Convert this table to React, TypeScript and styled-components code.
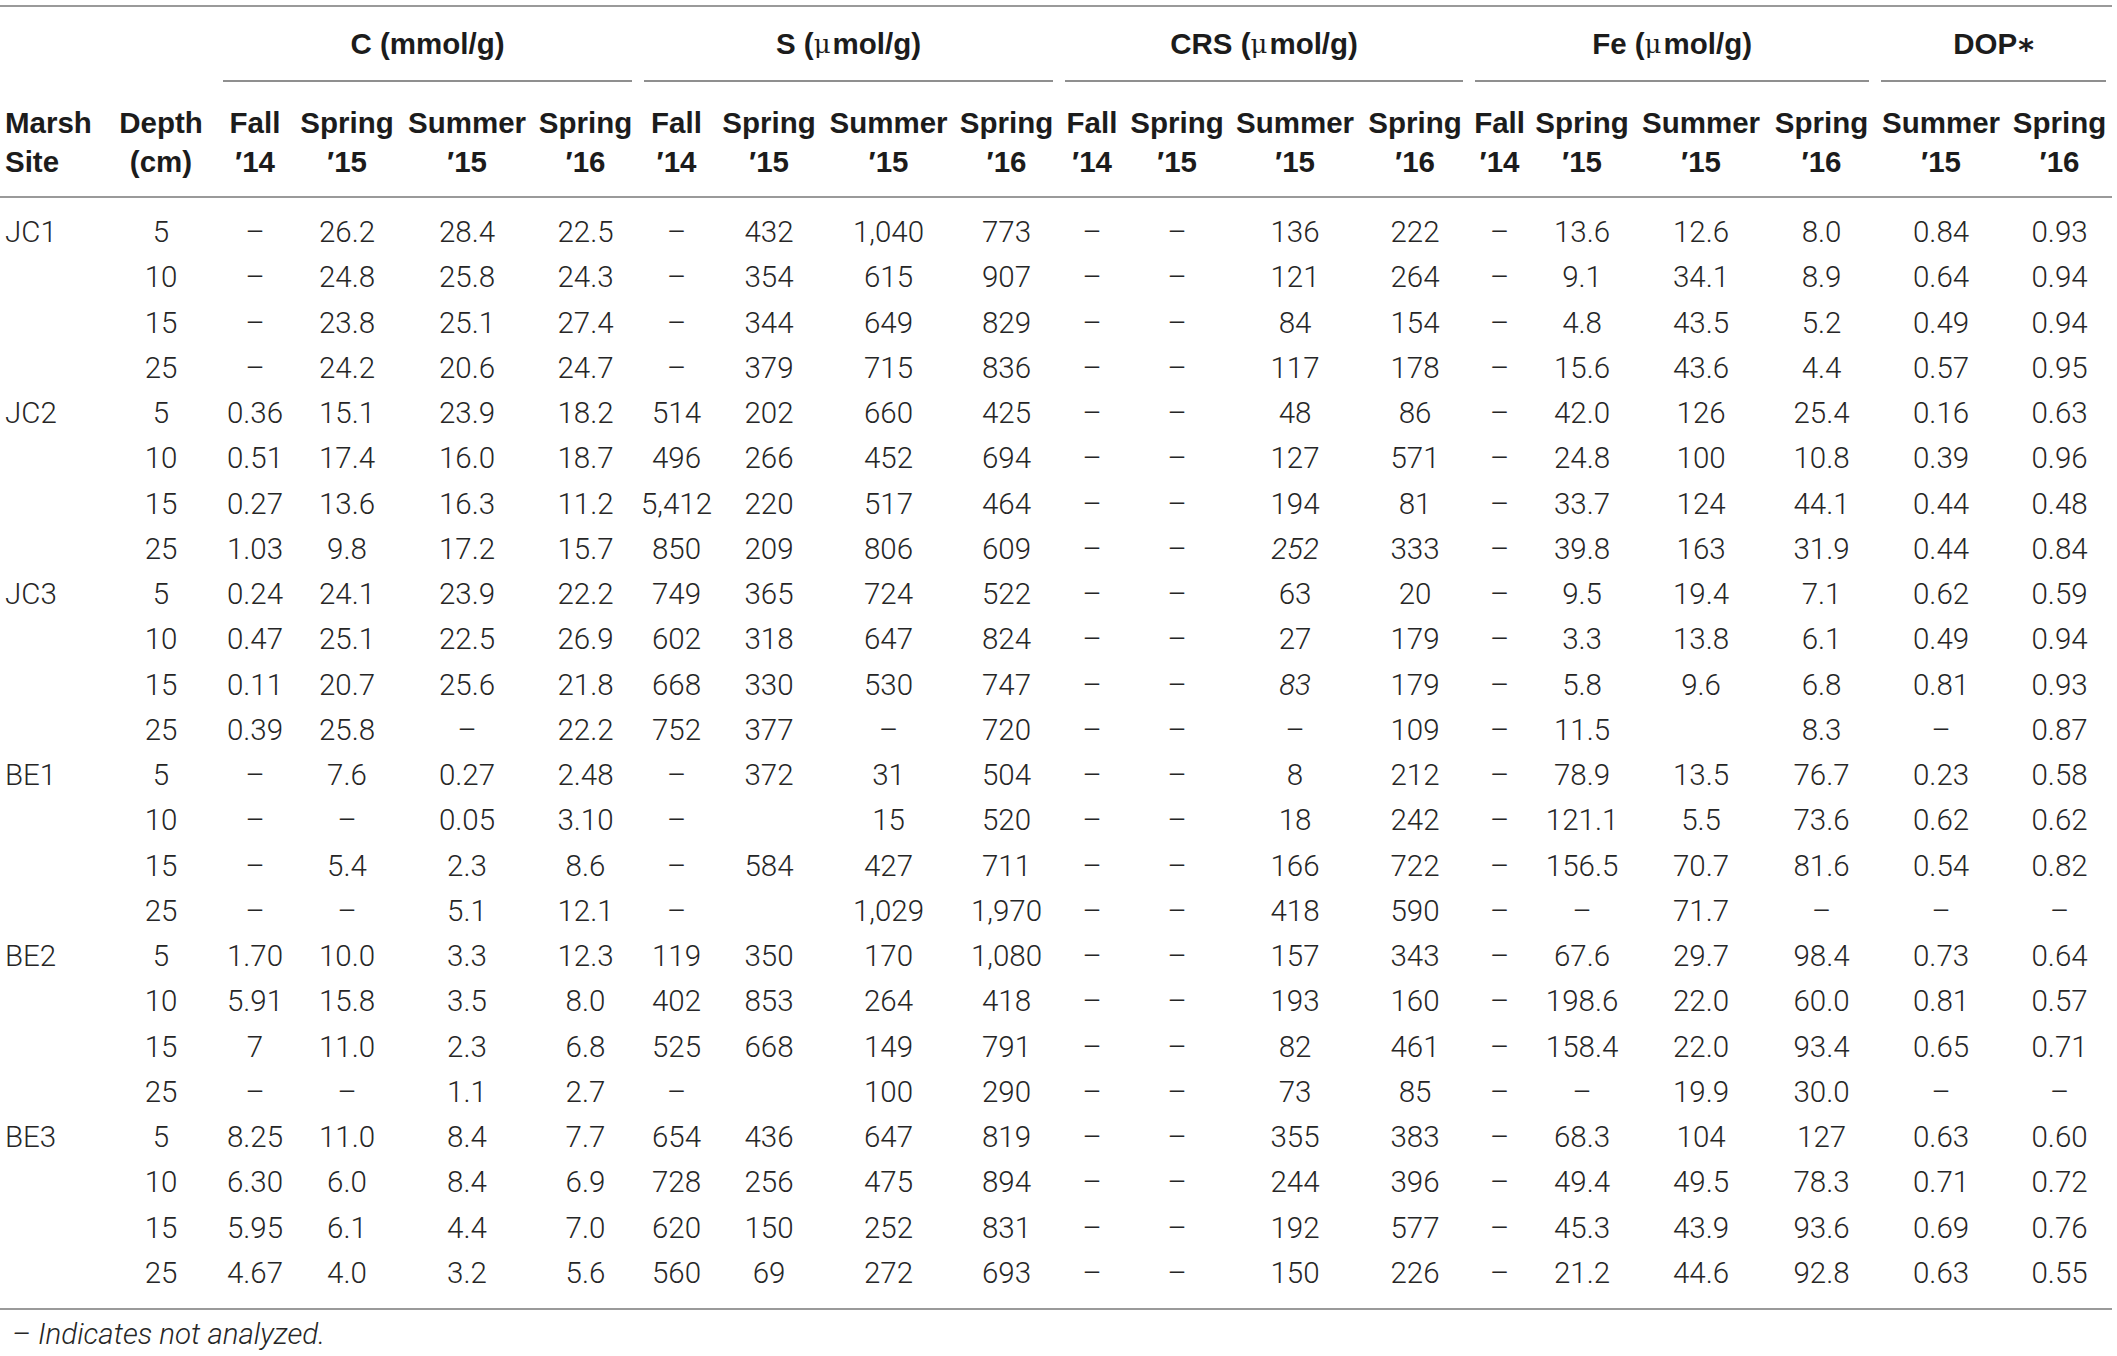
import React from 'react';
import styled, { createGlobalStyle } from 'styled-components';

const GlobalStyle = createGlobalStyle`
    body {
        margin: 0;
        background: #ffffff;
    }
`;

const widths = [105, 112, 76, 108, 132, 105, 77, 108, 131, 105, 66, 104, 132, 108, 61, 104, 134, 107, 132, 105];

const groups = [
    { label: 'C', unit: 'mmol/g', micro: false, span: 4 },
    { label: 'S', unit: 'mol/g', micro: true, span: 4 },
    { label: 'CRS', unit: 'mol/g', micro: true, span: 4 },
    { label: 'Fe', unit: 'mol/g', micro: true, span: 4 },
    { label: 'DOP', unit: '', micro: false, span: 2 },
];

const seasons = [
    ['Fall', '14'], ['Spring', '15'], ['Summer', '15'], ['Spring', '16'],
    ['Fall', '14'], ['Spring', '15'], ['Summer', '15'], ['Spring', '16'],
    ['Fall', '14'], ['Spring', '15'], ['Summer', '15'], ['Spring', '16'],
    ['Fall', '14'], ['Spring', '15'], ['Summer', '15'], ['Spring', '16'],
    ['Summer', '15'], ['Spring', '16'],
];

// "_" marks an italic value, "." a blank cell
const sites: { site: string; rows: [string, string][] }[] = [
    { site: 'JC1', rows: [
        ['5', '– 26.2 28.4 22.5 – 432 1,040 773 – – 136 222 – 13.6 12.6 8.0 0.84 0.93'],
        ['10', '– 24.8 25.8 24.3 – 354 615 907 – – 121 264 – 9.1 34.1 8.9 0.64 0.94'],
        ['15', '– 23.8 25.1 27.4 – 344 649 829 – – 84 154 – 4.8 43.5 5.2 0.49 0.94'],
        ['25', '– 24.2 20.6 24.7 – 379 715 836 – – 117 178 – 15.6 43.6 4.4 0.57 0.95'],
    ] },
    { site: 'JC2', rows: [
        ['5', '0.36 15.1 23.9 18.2 514 202 660 425 – – 48 86 – 42.0 126 25.4 0.16 0.63'],
        ['10', '0.51 17.4 16.0 18.7 496 266 452 694 – – 127 571 – 24.8 100 10.8 0.39 0.96'],
        ['15', '0.27 13.6 16.3 11.2 5,412 220 517 464 – – 194 81 – 33.7 124 44.1 0.44 0.48'],
        ['25', '1.03 9.8 17.2 15.7 850 209 806 609 – – _252 333 – 39.8 163 31.9 0.44 0.84'],
    ] },
    { site: 'JC3', rows: [
        ['5', '0.24 24.1 23.9 22.2 749 365 724 522 – – 63 20 – 9.5 19.4 7.1 0.62 0.59'],
        ['10', '0.47 25.1 22.5 26.9 602 318 647 824 – – 27 179 – 3.3 13.8 6.1 0.49 0.94'],
        ['15', '0.11 20.7 25.6 21.8 668 330 530 747 – – _83 179 – 5.8 9.6 6.8 0.81 0.93'],
        ['25', '0.39 25.8 – 22.2 752 377 – 720 – – – 109 – 11.5 . 8.3 – 0.87'],
    ] },
    { site: 'BE1', rows: [
        ['5', '– 7.6 0.27 2.48 – 372 31 504 – – 8 212 – 78.9 13.5 76.7 0.23 0.58'],
        ['10', '– – 0.05 3.10 – . 15 520 – – 18 242 – 121.1 5.5 73.6 0.62 0.62'],
        ['15', '– 5.4 2.3 8.6 – 584 427 711 – – 166 722 – 156.5 70.7 81.6 0.54 0.82'],
        ['25', '– – 5.1 12.1 – . 1,029 1,970 – – 418 590 – – 71.7 – – –'],
    ] },
    { site: 'BE2', rows: [
        ['5', '1.70 10.0 3.3 12.3 119 350 170 1,080 – – 157 343 – 67.6 29.7 98.4 0.73 0.64'],
        ['10', '5.91 15.8 3.5 8.0 402 853 264 418 – – 193 160 – 198.6 22.0 60.0 0.81 0.57'],
        ['15', '7 11.0 2.3 6.8 525 668 149 791 – – 82 461 – 158.4 22.0 93.4 0.65 0.71'],
        ['25', '– – 1.1 2.7 – . 100 290 – – 73 85 – – 19.9 30.0 – –'],
    ] },
    { site: 'BE3', rows: [
        ['5', '8.25 11.0 8.4 7.7 654 436 647 819 – – 355 383 – 68.3 104 127 0.63 0.60'],
        ['10', '6.30 6.0 8.4 6.9 728 256 475 894 – – 244 396 – 49.4 49.5 78.3 0.71 0.72'],
        ['15', '5.95 6.1 4.4 7.0 620 150 252 831 – – 192 577 – 45.3 43.9 93.6 0.69 0.76'],
        ['25', '4.67 4.0 3.2 5.6 560 69 272 693 – – 150 226 – 21.2 44.6 92.8 0.63 0.55'],
    ] },
];

const Sheet = styled.div`
    width: 2117px;
    padding-top: 5px;
`;

const DataTable = styled.table`
    width: 2112px;
    table-layout: fixed;
    border-collapse: separate;
    border-spacing: 0;
`;

const GroupCell = styled.th`
    height: 75px;
    padding: 0 6px;
    border-top: 2px solid #9a9a9a;
    vertical-align: bottom;
`;

const GroupLabel = styled.div<{ $ruled: boolean }>`
    height: 73px;
    display: flex;
    align-items: center;
    justify-content: center;
    border-bottom: 2px solid ${p => (p.$ruled ? '#8f8f8f' : 'transparent')};
    font-family: "Liberation Sans", Arial, sans-serif;
    font-weight: 700;
    font-size: 29.5px;
    color: #1c1c1c;
    white-space: pre;
`;

const Micro = styled.span`
    font-family: "DejaVu Serif", serif;
    font-weight: 400;
    font-size: 26px;
    margin-right: 2px;
`;

const Star = styled.span`
    font-family: "DejaVu Sans", sans-serif;
    font-weight: 700;
    font-size: 30px;
    margin-left: 1px;
    position: relative;
    top: -2px;
`;

const ColHead = styled.th<{ $align?: 'left' | 'center' }>`
    height: 93px;
    padding: 21px 0 0 ${p => (p.$align === 'left' ? '5px' : '0')};
    vertical-align: top;
    text-align: ${p => p.$align ?? 'center'};
    border-bottom: 2px solid #9a9a9a;
    font-family: "Liberation Sans", Arial, sans-serif;
    font-weight: 700;
    font-size: 29.5px;
    line-height: 39px;
    color: #1c1c1c;
    white-space: nowrap;
`;

const Cell = styled.td<{ $align?: 'left' | 'center'; $edge?: 'first' | 'last'; $italic?: boolean }>`
    height: 45.25px;
    padding: ${p => (p.$edge === 'first' ? '12px' : '0')} 0 ${p => (p.$edge === 'last' ? '12px' : '0')}
        ${p => (p.$align === 'left' ? '5px' : '0')};
    text-align: ${p => p.$align ?? 'center'};
    vertical-align: bottom;
    border-bottom: ${p => (p.$edge === 'last' ? '2px solid #9a9a9a' : 'none')};
    font-family: Roboto, "Liberation Sans", sans-serif;
    font-weight: 300;
    font-style: ${p => (p.$italic ? 'italic' : 'normal')};
    font-size: 29.5px;
    line-height: 45.25px;
    color: #262626;
    white-space: nowrap;
`;

const Note = styled.p`
    margin: 4px 0 0;
    padding-left: 12px;
    font-family: Roboto, "Liberation Sans", sans-serif;
    font-weight: 300;
    font-style: italic;
    font-size: 29.5px;
    line-height: 40px;
    color: #262626;
`;

export default function App() {
    const total = sites.reduce((n, s) => n + s.rows.length, 0);
    let index = 0;

    return (
        <Sheet>
            <GlobalStyle />
            <DataTable>
                <colgroup>
                    {widths.map((w, i) => <col key={i} style={{ width: w }} />)}
                </colgroup>
                <thead>
                    <tr>
                        <GroupCell colSpan={2}>
                            <GroupLabel $ruled={false} />
                        </GroupCell>
                        {groups.map(g => (
                            <GroupCell key={g.label} colSpan={g.span}>
                                <GroupLabel $ruled>
                                    {g.label === 'DOP' ? (
                                        <>DOP<Star>⁎</Star></>
                                    ) : (
                                        <>
                                            {g.label} (
                                            {g.micro && <Micro>μ</Micro>}
                                            {g.unit})
                                        </>
                                    )}
                                </GroupLabel>
                            </GroupCell>
                        ))}
                    </tr>
                    <tr>
                        <ColHead $align="left">Marsh<br />Site</ColHead>
                        <ColHead>Depth<br />(cm)</ColHead>
                        {seasons.map(([name, year], i) => (
                            <ColHead key={i}>{name}<br />′{year}</ColHead>
                        ))}
                    </tr>
                </thead>
                <tbody>
                    {sites.map(s => s.rows.map(([depth, line], r) => {
                        const edge = index === 0 ? 'first' : index === total - 1 ? 'last' : undefined;
                        index += 1;
                        return (
                            <tr key={s.site + depth}>
                                <Cell $align="left" $edge={edge}>{r === 0 ? s.site : ''}</Cell>
                                <Cell $edge={edge}>{depth}</Cell>
                                {line.split(' ').map((v, i) => (
                                    <Cell key={i} $edge={edge} $italic={v.startsWith('_')}>
                                        {v === '.' ? '' : v.replace('_', '')}
                                    </Cell>
                                ))}
                            </tr>
                        );
                    }))}
                </tbody>
            </DataTable>
            <Note>– Indicates not analyzed.</Note>
        </Sheet>
    );
}
